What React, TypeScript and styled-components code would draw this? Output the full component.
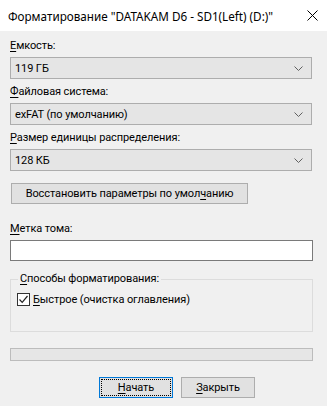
import React from "react";
import styled, { createGlobalStyle } from "styled-components";

const Global = createGlobalStyle`
  html, body { margin: 0; padding: 0; background: #f0f0f0; }
  * { box-sizing: border-box; }
`;

const Window = styled.div`
  width: 327px;
  height: 406px;
  background: #f0f0f0;
  font-family: Roboto, "Noto Sans", sans-serif;
  font-size: 11px;
  letter-spacing: -0.1px;
  color: #000;
  display: flex;
  flex-direction: column;
  overflow: hidden;
`;

const TitleBar = styled.div`
  height: 31px;
  background: #fff;
  display: flex;
  align-items: center;
  justify-content: space-between;
  padding: 0 8px 0 8px;
  flex-shrink: 0;
`;

const Title = styled.div`
  font-family: "Noto Sans", sans-serif;
  font-size: 11.7px;
  letter-spacing: 0;
  white-space: nowrap;
`;

const CloseIcon = styled.svg`
  width: 11px;
  height: 11px;
  margin-right: 1px;
`;

const Content = styled.div`
  display: flex;
  flex-direction: column;
  padding: 7px 14px 0 10px;
`;

const Label = styled.div<{ $top?: number }>`
  height: 16px;
  line-height: 16px;
  margin-top: ${(p) => p.$top ?? 0}px;
  margin-bottom: 3px;
  white-space: nowrap;
`;

const U = styled.span`
  text-decoration: underline;
  text-underline-offset: 2px;
`;

const Combo = styled.div`
  height: 22px;
  background: #e5e5e5;
  border: 1px solid #adadad;
  display: flex;
  align-items: center;
  justify-content: space-between;
  padding: 0 8px 0 4px;
  margin-right: 1px;
`;

const Chevron = styled.svg`
  width: 9px;
  height: 5px;
`;

const PushButton = styled.div<{ $w: number; $default?: boolean }>`
  width: ${(p) => p.$w}px;
  height: 21px;
  background: #e1e1e1;
  border: 1px solid ${(p) => (p.$default ? "#0078d7" : "#adadad")};
  display: flex;
  align-items: center;
  justify-content: center;
  position: relative;
  white-space: nowrap;
`;

const FocusRect = styled.div`
  position: absolute;
  inset: 1px;
  border: 1px dotted #000;
`;

const RestoreRow = styled.div`
  margin-top: 12px;
  padding-left: 1px;
`;

const TextBox = styled.div`
  height: 21px;
  background: #fff;
  border: 1px solid #7a7a7a;
`;

const Group = styled.fieldset`
  margin: 11px 0 0 0;
  padding: 4px 0 0 6px;
  height: 60px;
  border: 1px solid #dcdcdc;
  border-radius: 0;
`;

const Legend = styled.legend`
  padding: 0 2px 0 2px;
  margin-left: 1px;
  line-height: 14px;
`;

const CheckRow = styled.div`
  display: flex;
  align-items: center;
  gap: 3px;
  margin-top: 3px;
`;

const CheckBox = styled.div`
  width: 13px;
  height: 13px;
  border: 1px solid #333;
  background: #fff;
  display: flex;
  align-items: center;
  justify-content: center;
`;

const Progress = styled.div`
  margin-top: 16px;
  height: 13px;
  background: #e6e6e6;
  border: 1px solid #bcbcbc;
`;

const Buttons = styled.div`
  display: flex;
  gap: 8px;
  margin-top: 16px;
  padding-left: 89px;
`;

const ChevronIcon = () => (
  <Chevron viewBox="0 0 9 5">
    <path d="M0.5 0.5 L4.5 4.5 L8.5 0.5" fill="none" stroke="#606060" strokeWidth="1" />
  </Chevron>
);

export default function App() {
  return (
    <>
      <Global />
      <Window>
        <TitleBar>
          <Title>Форматирование "DATAKAM D6 - SD1(Left) (D:)"</Title>
          <CloseIcon viewBox="0 0 11 11">
            <path d="M0.5 0.5 L10.5 10.5 M10.5 0.5 L0.5 10.5" stroke="#000" strokeWidth="1" />
          </CloseIcon>
        </TitleBar>
        <Content>
          <Label>
            <U>Е</U>мкость:
          </Label>
          <Combo>
            <span>119 ГБ</span>
            <ChevronIcon />
          </Combo>
          <Label $top={5}>
            <U>Ф</U>айловая система:
          </Label>
          <Combo>
            <span>exFAT (по умолчанию)</span>
            <ChevronIcon />
          </Combo>
          <Label $top={5}>
            <U>Р</U>азмер единицы распределения:
          </Label>
          <Combo>
            <span>128 КБ</span>
            <ChevronIcon />
          </Combo>
          <RestoreRow>
            <PushButton $w={237}>
              Восстановить параметры по умол<U>ч</U>анию
            </PushButton>
          </RestoreRow>
          <Label $top={17}>
            <U>М</U>етка тома:
          </Label>
          <TextBox />
          <Group>
            <Legend>
              <U>С</U>пособы форматирования:
            </Legend>
            <CheckRow>
              <CheckBox>
                <svg width="11" height="11" viewBox="0 0 11 11">
                  <path d="M1.5 5.5 L4.2 8.3 L9.5 2" fill="none" stroke="#222" strokeWidth="1.2" />
                </svg>
              </CheckBox>
              <span>
                <U>Б</U>ыстрое (очистка оглавления)
              </span>
            </CheckRow>
          </Group>
          <Progress />
          <Buttons>
            <PushButton $w={74} $default>
              <FocusRect />
              <span>
                <U>Н</U>ачать
              </span>
            </PushButton>
            <PushButton $w={74}>
              <span>
                <U>З</U>акрыть
              </span>
            </PushButton>
          </Buttons>
        </Content>
      </Window>
    </>
  );
}
